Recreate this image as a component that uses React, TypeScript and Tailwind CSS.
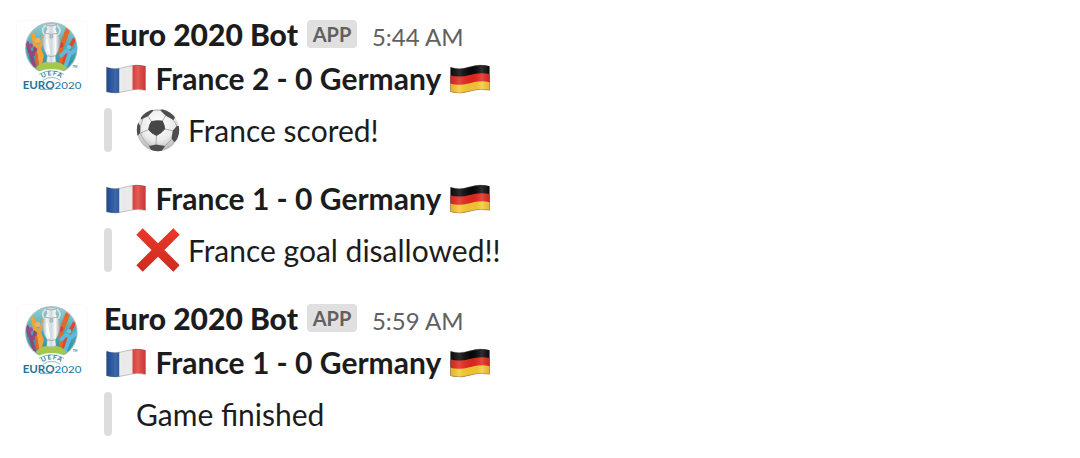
import { useId } from "react";
import type { ReactNode } from "react";

function Logo() {
  const id = useId();
  const silver = `${id}s`;
  const disc = `${id}d`;
  const clip = `${id}c`;
  const arc = `${id}a`;
  return (
    <svg viewBox="12 24 216 216" className="block size-[72px] shrink-0" aria-hidden="true">
      <defs>
        <linearGradient id={silver}>
          <stop offset="0" stopColor="#9fb0b5" />
          <stop offset=".25" stopColor="#f3f6f7" />
          <stop offset=".5" stopColor="#cfd8da" />
          <stop offset=".72" stopColor="#fafbfb" />
          <stop offset="1" stopColor="#8e9ca3" />
        </linearGradient>
        <linearGradient id={disc} x1="0" y1="0" x2="0" y2="1">
          <stop offset="0" stopColor="#9bd0d5" />
          <stop offset=".5" stopColor="#4aaab5" />
          <stop offset="1" stopColor="#1c8799" />
        </linearGradient>
        <clipPath id={clip}>
          <circle cx="118" cy="109" r="76" />
        </clipPath>
        <path id={arc} d="M86 203Q119 177 153 203" />
      </defs>
      <rect x="13" y="25" width="214" height="214" rx="18" fill="#fff" stroke="#f7f7f7" strokeWidth="2" />
      <circle cx="118" cy="109" r="79" fill="#aebfc2" />
      <g clipPath={`url(#${clip})`} fill="none" strokeLinecap="round" strokeLinejoin="round">
        <rect x="38" y="26" width="162" height="166" fill={`url(#${disc})`} />
        <path d="M45 92L53 120L66 126L70 108M56 122L66 162" stroke="#91487f" strokeWidth="11" />
        <path d="M63 68L68 96L82 108L98 70M80 106L90 130L84 162" stroke="#f0a33c" strokeWidth="11" />
        <path d="M80 118L86 160" stroke="#f0a33c" strokeWidth="10" />
        <path d="M72 124L77 160" stroke="#e2642c" strokeWidth="8" />
        <path d="M167 54L156 84L146 108L150 160" stroke="#e06a2b" strokeWidth="15" />
        <path d="M187 82L175 104L162 130L154 158" stroke="#d94a30" strokeWidth="11" />
        <path d="M194 110L178 124L162 116L148 130M174 122L160 164" stroke="#5db9dd" strokeWidth="12" />
        <circle cx="77" cy="85" r="8" fill="#f6b252" />
        <circle cx="56" cy="101" r="7" fill="#a84e87" />
        <circle cx="146" cy="99" r="8" fill="#cf4135" />
        <circle cx="171" cy="106" r="7" fill="#71c5e3" />
        <path d="M60 192Q72 149 118 148Q164 149 176 192Z" fill="#a4c84d" />
      </g>
      <path d="M76 181Q96 171 118 171Q142 171 161 181L151 197H86Z" fill="#fff" />
      <path d="M102 38Q118 32 134 38L131 52L139 68Q149 82 144 99Q139 118 130 132L132 149Q118 156 104 149L106 132Q96 116 92 99Q87 82 97 68L105 52Z" fill={`url(#${silver})`} stroke="#a1abb0" strokeWidth="1.5" />
      <path d="M97 68Q85 53 102 39M139 68Q151 53 134 39" fill="none" stroke="#d8e0e2" strokeWidth="5" />
      <path d="M102 39Q118 45 134 39M100 64Q118 70 136 64M107 131Q118 137 129 131" fill="none" stroke="#84949a" strokeWidth="2" />
      <circle cx="118" cy="74" r="5" fill="#b3c0c4" stroke="#8e9ba0" strokeWidth="1.5" />
      <path d="M105 84Q108 110 112 123" fill="none" stroke="#fff" strokeWidth="6" strokeLinecap="round" />
      <path d="M81 187Q118 166 156 187M93 205Q119 187 145 205" fill="none" stroke="#4a9dbb" strokeWidth="2" />
      <text fontFamily="Lato, sans-serif" fontSize="20" fontWeight="700" fill="#2b83a5" letterSpacing="3">
        <textPath href={`#${arc}`} startOffset="51%" textAnchor="middle">UEFA</textPath>
      </text>
      <text x="182" y="168" fontFamily="Lato, sans-serif" fontSize="9" fontWeight="700" fill="#287aa0">TM</text>
      <text x="32" y="230" fontFamily="Lato, sans-serif" fontSize="31" fill="#20759a" textLength="176" lengthAdjust="spacingAndGlyphs">
        <tspan fontWeight="700">EURO</tspan>
        <tspan>2020</tspan>
      </text>
      <path d="M84 232H122" stroke="#20759a" strokeWidth="2" />
    </svg>
  );
}

const flagShape = "M1.5 4.2Q10 7.2 20 4Q31 .6 40.5 3.2V27.3Q31 25 21 28.2Q11 31.5 1.5 28.8Z";

function Flag({ country }: { country: "fr" | "de" }) {
  const id = useId();
  return (
    <svg viewBox="0 0 42 32" className="mt-px block h-8 w-[42px] shrink-0" role="img">
      <defs>
        <clipPath id={`${id}c`}>
          <path d={flagShape} />
        </clipPath>
        <linearGradient id={`${id}g`}>
          <stop offset="0" stopColor="#000" stopOpacity=".12" />
          <stop offset=".25" stopColor="#fff" stopOpacity=".14" />
          <stop offset=".55" stopColor="#000" stopOpacity=".04" />
          <stop offset=".78" stopColor="#fff" stopOpacity=".16" />
          <stop offset="1" stopColor="#000" stopOpacity=".1" />
        </linearGradient>
      </defs>
      <g clipPath={`url(#${id}c)`}>
        {country === "fr" ? (
          <>
            <path d="M0 0H14.5V32H0Z" fill="#1d4f9c" />
            <path d="M14.5 0H27.5V32H14.5Z" fill="#f5f5f5" />
            <path d="M27.5 0H42V32H27.5Z" fill="#e03c36" />
          </>
        ) : (
          <>
            <path d="M0 0H42V20H0Z" fill="#080808" />
            <path d="M0 12Q10 15 20.5 12Q31 9 42 11.3V32H0Z" fill="#e3271d" />
            <path d="M0 20.5Q10 23.3 20.5 20.2Q31 17 42 19.4V32H0Z" fill="#f7c933" />
          </>
        )}
        <path d="M0 0H42V32H0Z" fill={`url(#${id}g)`} />
      </g>
      <path d={flagShape} fill="none" stroke="#555" strokeOpacity=".45" strokeWidth=".7" />
    </svg>
  );
}

function Ball() {
  const id = useId();
  return (
    <svg viewBox="0 0 44 44" className="block size-11 shrink-0" role="img">
      <defs>
        <radialGradient id={`${id}g`} cx=".5" cy=".36" r=".66">
          <stop offset="0" stopColor="#fff" />
          <stop offset=".6" stopColor="#ebebeb" />
          <stop offset="1" stopColor="#adadad" />
        </radialGradient>
        <clipPath id={`${id}c`}>
          <circle cx="22" cy="22" r="21.2" />
        </clipPath>
      </defs>
      <circle cx="22" cy="22" r="21.2" fill={`url(#${id}g)`} />
      <g clipPath={`url(#${id}c)`} strokeLinejoin="round">
        <path d="M15.5 13.5L12 8.3M26.3 13L29.7 7.7M28.8 21L36.7 22.7M20.5 27.5L20 36.5M12.6 21.7L4.5 25M7 10.5L4.5 18M17 2.7Q20 1.8 24.3 2.3M36 11Q40 14 41 19M35.7 31Q32 36 28 38.5M4.5 25Q7 33 14 38" fill="none" stroke="#a5a5a5" strokeWidth=".9" />
        <path d="M15.5 13.5Q21 12.2 26.3 13Q28.5 17 28.8 21Q25.5 25 20.5 27.5Q15.5 25.5 12.6 21.7Q13 17 15.5 13.5Z" fill="#474747" stroke="#3c3c3c" strokeWidth=".8" />
        <path d="M5 11.5L12 8.3L17.5 2.5L14 0L4 6ZM24 2L29.7 7.7L37.5 12L40 8L30 0ZM-1 15L2.5 15L4.5 18.5L4.2 25L1.5 28L-1 27ZM44 18L40.8 18L36.7 22.7L35.5 30.5L38 34L44 30ZM13 38L20 36.5L29 38L25 44H16Z" fill="#4d4d4d" />
      </g>
    </svg>
  );
}

function Cross() {
  const id = useId();
  return (
    <svg viewBox="0 0 44 44" className="block size-11 shrink-0" role="img">
      <defs>
        <linearGradient id={id} x1="0" y1="0" x2="0" y2="1">
          <stop offset="0" stopColor="#ea3829" />
          <stop offset="1" stopColor="#cf2a20" />
        </linearGradient>
      </defs>
      <path d="M6.7.3L22 15.3L37.3.3L43.7 6.7L28.5 22L43.7 37.3L37.3 43.7L22 28.7L6.7 43.7L.3 37.3L15.5 22L.3 6.7Z" fill={`url(#${id})`} />
    </svg>
  );
}

function Score({ home, away }: { home: number; away: number }) {
  return (
    <div className="flex h-11 items-center pl-px font-bold">
      <Flag country="fr" />
      <span className="mr-2 ml-[8.5px] whitespace-nowrap">
        France {home} - {away} Germany
      </span>
      <Flag country="de" />
    </div>
  );
}

function Quote({ icon, children }: { icon?: ReactNode; children: ReactNode }) {
  return (
    <div className="mt-2 flex h-11 items-center">
      <div className="mr-6 h-11 w-2 shrink-0 rounded-full bg-[#dddddd]" />
      {icon && <span className="mr-2">{icon}</span>}
      <span className="whitespace-nowrap">{children}</span>
    </div>
  );
}

function Message({ time, children }: { time: string; children: ReactNode }) {
  return (
    <article className="flex items-start gap-4 px-4">
      <div className="pt-2">
        <Logo />
      </div>
      <div className="min-w-0 flex-1">
        <header className="flex h-11 items-baseline">
          <span className="font-black">Euro 2020 Bot</span>
          <span className="ml-[9px] flex h-7 w-[50px] -translate-y-[4px] items-center justify-center rounded-[4px] bg-[#e0e0e0] text-[20px] leading-[30px] font-bold text-[#616061]">
            APP
          </span>
          <time className="ml-[15px] text-[24px] text-[#616061]">{time}</time>
        </header>
        {children}
      </div>
    </article>
  );
}

export default function App() {
  return (
    <main className="flex h-[458px] w-[1080px] flex-col gap-6 overflow-hidden bg-white pt-3 font-['Lato',sans-serif] text-[30px] leading-[44px] text-[#1d1c1d]">
      <Message time="5:44 AM">
        <Score home={2} away={0} />
        <Quote icon={<Ball />}>France scored!</Quote>
        <div className="h-6" />
        <Score home={1} away={0} />
        <Quote icon={<Cross />}>France goal disallowed!!</Quote>
      </Message>
      <Message time="5:59 AM">
        <Score home={1} away={0} />
        <Quote>Game finished</Quote>
      </Message>
    </main>
  );
}
